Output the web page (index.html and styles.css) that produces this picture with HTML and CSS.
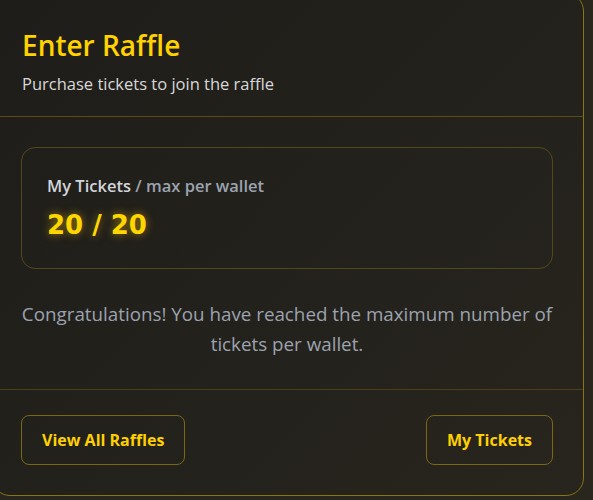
FILE: index.html
```html
<!DOCTYPE html>
<html>
<head>
<meta charset="utf-8">
<link rel="stylesheet" href="styles.css">
</head>
<body>
<div class="page">
  <section class="card">
    <header class="card-header">
      <h1 class="title">Enter Raffle</h1>
      <p class="subtitle">Purchase tickets to join the raffle</p>
    </header>
    <div class="card-body">
      <div class="stat-box">
        <div class="stat-label"><span class="stat-strong">My Tickets</span> / max per wallet</div>
        <div class="stat-value">20 / 20</div>
      </div>
      <p class="message">Congratulations! You have reached the maximum number of tickets per wallet.</p>
    </div>
    <footer class="card-footer">
      <button class="btn">View All Raffles</button>
      <button class="btn">My Tickets</button>
    </footer>
  </section>
</div>
</body>
</html>
```
FILE: styles.css
```css
html, body {
  margin: 0;
  padding: 0;
  background: #29261d;
  height: 100%;
}
.page {
  width: 593px;
  height: 500px;
  overflow: hidden;
  font-family: "Open Sans", "Noto Sans", sans-serif;
}
.card {
  margin: -7px 9px 0 -8px;
  border: 1px solid #8a7414;
  border-radius: 18px;
  background: linear-gradient(135deg, #1f1d19 0%, #23211c 50%, #28251e 100%);
}
.card-header {
  padding: 33px 29px 21px 29px;
  border-bottom: 1px solid #5a4c12;
}
.title {
  margin: 0;
  color: #ffd200;
  font-size: 28px;
  font-weight: 600;
  line-height: 36px;
}
.subtitle {
  margin: 10px 0 0 0;
  color: #d8d8d8;
  font-size: 16.5px;
  line-height: 22px;
}
.card-body {
  padding: 30px 30px 29.6px 28px;
  border-bottom: 1px solid #4b4015;
}
.stat-box {
  border: 1px solid #54481a;
  border-radius: 14px;
  padding: 27px 25px 0 25px;
  height: 122px;
  box-sizing: border-box;
}
.stat-label {
  color: #9ca3af;
  font-size: 16.5px;
  font-weight: 600;
  line-height: 22px;
}
.stat-strong {
  color: #d1d5db;
}
.stat-value {
  margin-top: 12px;
  color: #ffd700;
  font-family: "DejaVu Sans", sans-serif;
  font-weight: 700;
  font-size: 26px;
  line-height: 32px;
  text-shadow: 0 0 8px rgba(255, 200, 0, 0.55);
}
.message {
  margin: 30.4px 0 0 0;
  text-align: center;
  color: #9ca3af;
  font-size: 18.8px;
  line-height: 30px;
}
.card-footer {
  padding: 25px 30px 30px 28px;
  display: flex;
  justify-content: space-between;
  align-items: flex-start;
}
.btn {
  height: 50px;
  padding: 0 20px;
  background: transparent;
  border: 1px solid #7a6814;
  border-radius: 8px;
  color: #ffd000;
  font-family: "Open Sans", "Noto Sans", sans-serif;
  font-weight: 700;
  font-size: 16px;
  cursor: pointer;
}
```
